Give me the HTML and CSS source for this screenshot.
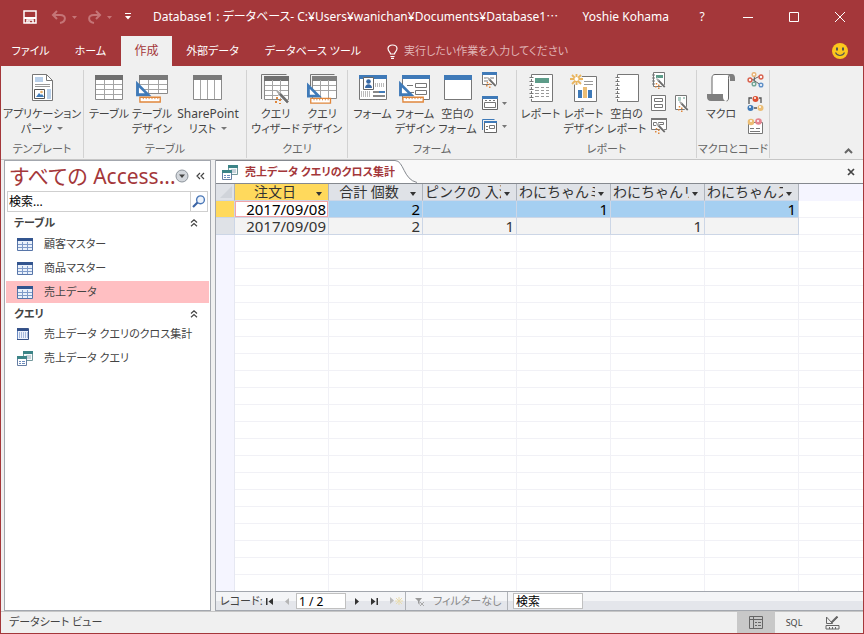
FILE: index.html
```html
<!DOCTYPE html>
<html lang="ja">
<head>
<meta charset="utf-8">
<title>Database1</title>
<link rel="stylesheet" href="styles.css">
</head>
<body>
<svg class="defs" width="0" height="0" aria-hidden="true">
  <symbol id="ruler" viewBox="0 0 33 30"><path d="M0 7v16h16z" fill="#3f7ab8"/><path d="M3 14v6h6z" fill="#fff"/><path d="M4 24h21v5H4z" fill="#fff" stroke="#e0873c" stroke-width="1.400"/><path d="M7.500 24v2M10.500 24v2M13.500 24v2M16.500 24v2M19.500 24v2M22.500 24v2" stroke="#e0873c"/></symbol>
  <symbol id="wand" viewBox="0 0 16 16"><path d="M2 2l11 12" stroke="#fff" stroke-width="4"/><path d="M4 4l9 9.500" stroke="#6e6e6e" stroke-width="2.600"/><path d="M2 2l3 3" stroke="#aaa" stroke-width="2"/><path d="M1 8h2v2H1zM4 10h2v2H4zM0 12h2v2H0zM4 14h2v2H4z" fill="#e0873c"/></symbol>
  <symbol id="sheet" viewBox="0 0 16 13"><path d="M.5.5h15v12H.5z" fill="#eaf1fb" stroke="#5775a8"/><path d="M0 0h16v3H0z" fill="#33558f"/><path d="M1 6.500h14M1 9.500h14M5.500 4v8M10.500 4v8" stroke="#7f9bc9"/></symbol>
  <symbol id="query" viewBox="0 0 16 15"><path d="M6.500.5h9v9h-9z" fill="#f5fafa" stroke="#74999c"/><path d="M6 0h10v3H6z" fill="#3c8487"/><path d="M9 5h5M9 7h5" stroke="#9ab"/><path d="M.5 5.500h9v9h-9z" fill="#fff" stroke="#667ea3"/><path d="M0 5h10v3H0z" fill="#3c8487"/><path d="M2 10h2v1H2zM5 10h3v1H5zM2 12h2v1H2zM5 12h3v1H5z" fill="#6d8dbd"/></symbol>
  <symbol id="crosstab" viewBox="0 0 14 12"><path d="M.5.5h13v11H.5z" fill="#edf2fb" stroke="#385388"/><path d="M1 1h12v2H1z" fill="#31508a"/><path d="M1 3h2v8H1z" fill="#6a8bc4"/><path d="M4 5h9M4 7h9M4 9h9" stroke="#5c7ebc" stroke-dasharray="1 1"/></symbol>
  <symbol id="chev" viewBox="0 0 8 8"><path d="M1 3.500L4 .8l3 2.700M1 7.300l3-2.700 3 2.700" fill="none" stroke="#444" stroke-width="1.200"/></symbol>
</svg>
<div class="window">
  <header class="titlebar">
    <div class="quick">
      <button class="q-save" aria-label="上書き保存"><svg width="14" height="14"><path d="M1 1h12v12H1z" fill="none" stroke="#fff" stroke-width="1.500"/><path d="M1 8h12" stroke="#fff" stroke-width="2"/><path d="M4 13v-3h6v3M6 11v2" fill="none" stroke="#fff" stroke-width="1.500"/></svg></button>
      <button class="q-undo" aria-label="元に戻す"><svg width="27" height="14" fill="none" stroke="#c57577"><path d="M6 1L2 5l4 4M2 5h7c7 0 6 7 0 8" stroke-width="2"/><path d="M21 6h5l-2.500 3z" fill="#c57577" stroke="none"/></svg></button>
      <button class="q-redo" aria-label="やり直し"><svg width="26" height="14" fill="none" stroke="#c57577"><path d="M9 1l4 4-4 4M13 5H7c-7 0-6 7 0 8" stroke-width="2"/><path d="M20 6h5l-2.500 3z" fill="#c57577" stroke="none"/></svg></button>
      <button class="q-more" aria-label="カスタマイズ"><svg width="6" height="7"><path d="M0 0h6v1H0zM0 3h6L3 6.500z" fill="#fff"/></svg></button>
    </div>
    <h1 class="doc-title">Database1 : データベース- C:¥Users¥wanichan¥Documents¥Database1<span class="cjk">…</span></h1>
    <span class="user">Yoshie Kohama</span>
    <button class="cap">?</button>
    <button class="cap" aria-label="最小化"><svg width="12" height="12"><path d="M1 6.500h10" stroke="#fff"/></svg></button>
    <button class="cap" aria-label="最大化"><svg width="12" height="12"><path d="M1.500 1.500h9v9h-9z" fill="none" stroke="#fff"/></svg></button>
    <button class="cap" aria-label="閉じる"><svg width="12" height="12"><path d="M1 1l10 10M11 1L1 11" stroke="#fff"/></svg></button>
  </header>
  <nav class="tabs">
    <button>ファイル</button><button>ホーム</button><button class="active">作成</button><button>外部データ</button><button>データベース ツール</button>
    <label class="tell"><svg width="11" height="15" fill="none" stroke="#fff" stroke-width="1.200"><path d="M3.500 10c0-2-2.500-2.500-2.500-5.500C1 2.500 3 1 5.500 1S10 2.500 10 4.500c0 3-2.500 3.500-2.500 5.500zM3.500 12.500h4M4 14.400h3"/></svg><input type="text" placeholder="実行したい作業を入力してください"></label>
    <button class="smile" aria-label="フィードバック"><svg width="16" height="16"><circle cx="8" cy="8" r="8" fill="#fcc71d"/><path d="M4 4.500h2v3H4zM10 4.500h2v3h-2z" fill="#555"/><path d="M3.500 9.500c2 4 7 4 9 0" fill="none" stroke="#555" stroke-width="1.200"/></svg></button>
  </nav>
  <div class="ribbon">
    <section class="group g-template">
      <div class="tools">
        <button class="big"><svg width="21" height="29"><path d="M.5.5h14l6 6v20H.5z" fill="#fff" stroke="#777"/><path d="M14.500.5v6h6" fill="none" stroke="#777"/><path d="M3 3h8v5H3zM15 15h4v10h-4z" fill="#b9d0ea"/><path d="M3 10.500h15M3 12.500h15" stroke="#999"/><path d="M2.500 15.500h10v9h-10z" fill="#fff" stroke="#555"/><path d="M4 23l3-4 2 2 1-1 2 3z" fill="#3f7ab8"/><circle cx="9.500" cy="18" r="1.300" fill="#e8b06a"/></svg><span>アプリケーション<br>パーツ<i class="caret"></i></span></button>
      </div>
      <h2>テンプレート</h2>
    </section>
    <section class="group g-table">
      <div class="tools">
        <button class="big"><svg width="28" height="29"><path d="M.5 2.500h27v23H.5z" fill="#fff" stroke="#8a8a8a"/><path d="M0 1h28v5H0z" fill="#6f6f6f"/><path d="M1 10.500h26M1 15.500h26M1 20.500h26M9.500 6v19M18.500 6v19" stroke="#a5a5a5"/></svg><span>テーブル</span></button>
        <button class="big"><svg width="32" height="29"><path d="M3.500 2.500h28v17h-28z" fill="#fff" stroke="#8a8a8a"/><path d="M3 1h29v5H3z" fill="#7a7a7a"/><path d="M4 10.500h27M4 15.500h27M12.500 6v13M22.500 6v13" stroke="#a5a5a5"/><use href="#ruler" width="32" height="29"/></svg><span>テーブル<br>デザイン</span></button>
        <button class="big"><svg width="30" height="29"><path d="M.5 2.500h28v23H.5z" fill="#fff" stroke="#8a8a8a"/><path d="M0 1h29v5H0z" fill="#7a7a7a"/><path d="M7.500 6v19M14.500 6v19M21.500 6v19" stroke="#a5a5a5"/></svg><span><span class="latin">SharePoint</span><br>リスト<i class="caret"></i></span></button>
      </div>
      <h2>テーブル</h2>
    </section>
    <section class="group g-query">
      <div class="tools">
        <button class="big"><svg width="30" height="31"><path d="M.5 25V.5h25" fill="none" stroke="#777"/><path d="M3.500 3.500h24v22h-24z" fill="#fff" stroke="#8a8a8a"/><path d="M3 2h25v5H3z" fill="#6f6f6f"/><path d="M4 11.500h23M4 16.500h23M4 21.500h23M11.500 6v19M19.500 6v19" stroke="#a5a5a5"/><use href="#wand" x="14" y="15" width="16" height="16"/></svg><span>クエリ<br>ウィザード</span></button>
        <button class="big"><svg width="31" height="31"><path d="M3.500 12V.5h24" fill="none" stroke="#777"/><path d="M5.500 3.500h24v21h-24z" fill="#fff" stroke="#8a8a8a"/><path d="M5 2h25v5H5z" fill="#7f7f7f"/><path d="M6 11.500h23M6 16.500h23M13.500 6v18M21.500 6v18" stroke="#a5a5a5"/><use href="#ruler" x="0" y="1" width="31" height="30"/></svg><span>クエリ<br>デザイン</span></button>
      </div>
      <h2>クエリ</h2>
    </section>
    <section class="group g-form">
      <div class="tools">
        <button class="big"><svg width="28" height="29"><path d="M.5 1.500h27v24H.5z" fill="#fff" stroke="#777"/><path d="M0 1h28v4H0z" fill="#3f7ab8"/><path d="M4.500 3.500h10v12h-10z" fill="#fff" stroke="#666"/><circle cx="9.500" cy="7.500" r="2.300" fill="#3768a5"/><path d="M6 14c0-5 7-5 7 0z" fill="#3768a5"/><path d="M16 10h10M16 12h10M2 18h10M2 20h10M2 22h10" stroke="#777" stroke-dasharray="1 1"/><path d="M14 18h6M14 22h12" stroke="#888" stroke-width="2"/><path d="M20 18h6" stroke="#3f7ab8" stroke-width="2"/></svg><span>フォーム</span></button>
        <button class="big"><svg width="32" height="29"><path d="M3.500 1.500h27v24h-27z" fill="#fff" stroke="#777"/><path d="M3 1h28v4H3z" fill="#3f7ab8"/><path d="M16.500 9.500h11v4h-11zM16.500 16.500h11v4h-11zM8 11.500h6M11 18.500h4" fill="none" stroke="#777"/><use href="#ruler" width="32" height="29"/></svg><span>フォーム<br>デザイン</span></button>
        <button class="big"><svg width="28" height="29"><path d="M.5 1.500h27v24H.5z" fill="#fff" stroke="#777"/><path d="M0 1h28v5H0z" fill="#3f7ab8"/></svg><span>空白の<br>フォーム</span></button>
        <div class="minis">
          <button aria-label="フォーム ウィザード"><svg width="16" height="16"><path d="M.5.5h14v12H.5z" fill="#fff" stroke="#777"/><path d="M0 0h15v3H0z" fill="#3f7ab8"/><path d="M2 6h4M2 9h4M8 6h4" stroke="#777"/><use href="#wand" x="4" y="4" width="12" height="12"/></svg></button>
          <button aria-label="ナビゲーション"><svg width="26" height="14"><path d="M.5.5h15v13H.5z" fill="#fff" stroke="#666"/><path d="M0 0h16v3H0z" fill="#3f7ab8"/><path d="M2.500 6.500h11v5h-11zM3 4.500h2M7 4.500h2M11 4.500h2" fill="none" stroke="#777"/><path d="M20 6h5l-2.500 3z" fill="#777"/></svg></button>
          <button aria-label="その他のフォーム"><svg width="26" height="14"><path d="M.5 11V.5h12" fill="none" stroke="#3f7ab8"/><path d="M2.500 2.500h12v11h-12z" fill="#fff" stroke="#666"/><path d="M2 2h13v2H2z" fill="#3f7ab8"/><path d="M7.500 6.500h5v3h-5zM4 7.500h2M4 10.500h2" fill="none" stroke="#777"/><path d="M20 6h5l-2.500 3z" fill="#777"/></svg></button>
        </div>
      </div>
      <h2>フォーム</h2>
    </section>
    <section class="group g-report">
      <div class="tools">
        <button class="big"><svg width="24" height="29"><path d="M2.500.5h21v27h-21z" fill="#fff" stroke="#777"/><path d="M6 4h14v5H6z" fill="#5d9c89"/><path d="M6 13.500h4M12 13.500h3M17 13.500h3M6 16.500h4M12 16.500h3M17 16.500h3M6 19.500h4M12 19.500h3M17 19.500h3M6 22.500h4M12 22.500h3M17 22.500h3" stroke="#999"/><path d="M2.500 3v24" stroke="#fff" stroke-width="3" stroke-dasharray="2 2"/><path d="M2.500 3v24" stroke="#777" stroke-width="4" stroke-dasharray="1 3"/></svg><span>レポート</span></button>
        <button class="big"><svg width="27" height="31"><path d="M4.500 2.500h22v25h-22z" fill="#fff" stroke="#777"/><path d="M14 7.500h9M14 10.500h9" stroke="#999"/><path d="M8 16h4v8H8zM18 16h4v8h-4z" fill="#3f7ab8"/><path d="M13 13h4v11h-4z" fill="#ecbe75"/><circle cx="6.500" cy="5" r="6" fill="#f0f0f0"/><path d="M6.500-1v12M0 5h13M2 1l9 9M11 1L2 10" stroke="#e9b55f" stroke-width="1.800"/><circle cx="6.500" cy="5" r="2" fill="#fff"/></svg><span>レポート<br>デザイン</span></button>
        <button class="big"><svg width="24" height="29"><path d="M2.500.5h21v27h-21z" fill="#fff" stroke="#777"/><path d="M2.500 3v24" stroke="#fff" stroke-width="3" stroke-dasharray="2 2"/><path d="M2.500 3v24" stroke="#777" stroke-width="4" stroke-dasharray="1 3"/></svg><span>空白の<br>レポート</span></button>
        <div class="minis">
          <button aria-label="レポート ウィザード"><svg width="16" height="17"><path d="M2.500.5h11v14h-11z" fill="#fff" stroke="#777"/><path d="M5 3h7v3H5z" fill="#5d9c89"/><path d="M1 3h3M1 6h3M1 9h3M1 12h3" stroke="#777"/><use href="#wand" x="4" y="5" width="12" height="12"/></svg></button>
          <button aria-label="伝票ウィザード"><svg width="15" height="16"><path d="M.5.5h14v15H.5zM3.500 3.500h8v3h-8zM3.500 9.500h8v3h-8z" fill="#fff" stroke="#777"/></svg></button>
          <button aria-label="はがきウィザード"><svg width="16" height="16"><path d="M.5.5h15v11H.5z" fill="#fff" stroke="#777"/><path d="M0 0h16v2H0z" fill="#777"/><path d="M2.500 4.500h3v3h-3zM7.500 4.500h5v2h-5z" fill="none" stroke="#777"/><use href="#wand" x="4" y="4" width="12" height="12"/></svg></button>
        </div>
        <div class="minis single"><button aria-label="宛名ラベル"><svg width="15" height="17"><path d="M.5.5h11v14H.5z" fill="#fff" stroke="#777"/><path d="M3 3h3M3 5h3M8 3h2" stroke="#5d9c89"/><use href="#wand" x="3" y="5" width="12" height="12"/></svg></button></div>
      </div>
      <h2>レポート</h2>
    </section>
    <section class="group g-macro">
      <div class="tools">
        <button class="big"><svg width="28" height="28"><path d="M5 21V4c0-2 1-3.500 3-3.500h16c-2 0-2.500 2-2.500 4V24c0 2-1 3-2 3" fill="#fff" stroke="#666"/><path d="M8 0h17c2 0 3 2 3 4v3h-5V4c0-2-1-3-3-3z" fill="#7f7f7f"/><path d="M0 20h16v3c0 2 1 4 3 4H4c-3 0-4-2-4-4z" fill="#7f7f7f"/></svg><span>マクロ</span></button>
        <div class="minis">
          <button aria-label="モジュール"><svg width="17" height="16" fill="#fff" stroke-width="1.500"><path d="M3 6l11 7M3 9l10-5M7 3l1 8" stroke="#666" stroke-width="1"/><circle cx="7" cy="2.500" r="1.800" stroke="#e9b57a"/><circle cx="14" cy="5" r="1.900" stroke="#d9634f"/><circle cx="3" cy="8" r="1.900" stroke="#d9634f"/><circle cx="7" cy="12" r="1.800" stroke="#75a797"/><circle cx="14" cy="13" r="1.800" stroke="#6090c8"/></svg></button>
          <button aria-label="クラス モジュール"><svg width="17" height="17"><path d="M2 9V3h3M12 3h2v5M7 13h3" fill="none" stroke="#555" stroke-width="1.300"/><circle cx="8.500" cy="4" r="3" fill="#dc5032"/><circle cx="3.500" cy="13" r="3" fill="#3f7ab8"/><circle cx="13.500" cy="13" r="3" fill="#ecbe75"/><circle cx="8" cy="3" r="1" fill="#fff"/><circle cx="3" cy="12" r="1" fill="#fff"/><circle cx="13" cy="12" r="1" fill="#fff"/></svg></button>
          <button aria-label="Visual Basic"><svg width="17" height="16"><path d="M1.500 4.500h14v11h-14z" fill="#fff" stroke="#777"/><path d="M3 10.500h4M9 10.500h4M3 13.500h10" stroke="#777"/><circle cx="4" cy="4" r="3.300" fill="#ecbe75"/><circle cx="11.500" cy="3.500" r="3.300" fill="#e48490"/><circle cx="4" cy="3" r="1" fill="#fff"/><circle cx="11" cy="3" r="1" fill="#fff"/></svg></button>
        </div>
      </div>
      <h2>マクロとコード</h2>
    </section>
    <button class="collapse" aria-label="リボンを折りたたむ"><svg width="9" height="6"><path d="M1 5l3.500-3.500L8 5" fill="none" stroke="#666" stroke-width="2"/></svg></button>
  </div>
  <main class="work">
    <aside class="nav-pane">
      <div class="nav-head"><h2>すべての Access...</h2><button aria-label="メニュー"><svg width="14" height="14"><circle cx="7" cy="7" r="6" fill="#d3d7dc" stroke="#8d949c"/><path d="M4 5.500h6L7 9z" fill="#444"/></svg></button><button aria-label="閉じる"><svg width="9" height="8"><path d="M4 1L1 4l3 3M8 1L5 4l3 3" fill="none" stroke="#444" stroke-width="1.200"/></svg></button></div>
      <div class="nav-search"><input type="text" value="検索..." aria-label="検索"><button aria-label="検索実行"><svg width="14" height="13"><circle cx="8.500" cy="4.800" r="3.900" fill="#eef4fc" stroke="#4b78b8" stroke-width="1.400"/><path d="M5.500 7.500L1 12" stroke="#3b64a4" stroke-width="2.200"/></svg></button></div>
      <h3>テーブル<svg width="8" height="8"><use href="#chev" width="8" height="8"/></svg></h3>
      <ul>
        <li><a href="#"><svg width="16" height="13"><use href="#sheet"/></svg>顧客マスター</a></li>
        <li><a href="#"><svg width="16" height="13"><use href="#sheet"/></svg>商品マスター</a></li>
        <li><a href="#" class="sel"><svg width="16" height="13"><use href="#sheet"/></svg>売上データ</a></li>
      </ul>
      <h3>クエリ<svg width="8" height="8"><use href="#chev" width="8" height="8"/></svg></h3>
      <ul>
        <li><a href="#"><svg width="16" height="12" viewBox="2 0 16 12"><use href="#crosstab" width="14" height="12"/></svg>売上データ クエリのクロス集計</a></li>
        <li><a href="#"><svg width="16" height="15"><use href="#query"/></svg>売上データ クエリ</a></li>
      </ul>
    </aside>
    <section class="doc">
      <div class="doc-tabs"><div class="doc-tab"><svg width="16" height="15"><use href="#query"/></svg>売上データ クエリのクロス集計</div><svg class="slope" width="22" height="23" viewBox="0 0 22 23"><path d="M0 0c9 0 8 20 22 23H0z" fill="#fff"/><path d="M0 .5c9 0 8 19 22 22" fill="none" stroke="#85898f"/></svg><button aria-label="閉じる"><svg width="8" height="8"><path d="M1 1l6 6M7 1L1 7" stroke="#444" stroke-width="1.700"/></svg></button></div>
      <div class="sheet">
        <table>
          <thead><tr><th class="corner"><svg width="12" height="12"><path d="M12 0v12H0z" fill="#d0d4da"/></svg></th><th class="cur"><div><span>注文日</span><i></i></div></th><th><div><span>合計 個数</span><i></i></div></th><th class="left"><div><span>ピンクの 入浴</span><i></i></div></th><th class="left"><div><span>わにちゃんミ</span><i></i></div></th><th class="left"><div><span>わにちゃんリ</span><i></i></div></th><th class="left"><div><span>わにちゃんス</span><i></i></div></th></tr></thead>
          <tbody>
            <tr class="on"><th></th><td class="focus">2017/09/08</td><td>2</td><td></td><td>1</td><td></td><td>1</td></tr>
            <tr><th></th><td>2017/09/09</td><td>2</td><td>1</td><td></td><td>1</td><td></td></tr>
          </tbody>
        </table>
      </div>
      <div class="record">
        <label for="rec">レコード:</label>
        <button aria-label="先頭"><svg width="8" height="7"><path d="M0 0h1.500v7H0zM7 0v7L2.500 3.500z" fill="#333"/></svg></button>
        <button aria-label="前"><svg width="5" height="7"><path d="M4 0v7L0 3.500z" fill="#b5b5b5"/></svg></button>
        <input id="rec" class="rec-no" type="text" value="1 / 2">
        <button aria-label="次"><svg width="5" height="7"><path d="M0 0v7l4-3.500z" fill="#333"/></svg></button>
        <button aria-label="最後"><svg width="8" height="7"><path d="M5.500 0H7v7H5.500zM0 0v7l4.500-3.500z" fill="#333"/></svg></button>
        <button aria-label="新規"><svg width="13" height="8"><path d="M0 0v7l4-3.500z" fill="#bbb"/><path d="M9 0v8M5 4h8M6 1l6 6M12 1L6 7" stroke="#e9dcae"/></svg></button>
        <button class="filter"><svg width="9" height="9"><path d="M0 1h7L4.500 4v4L3 6V4z" fill="#999"/><path d="M5 5l4 4M9 5L5 9" stroke="#aaa"/></svg>フィルターなし</button>
        <input class="find" type="text" value="検索" aria-label="検索">
      </div>
    </section>
  </main>
  <footer class="status"><span>データシート ビュー</span>
    <button class="view on" aria-label="データシート ビュー"><svg width="14" height="14" fill="none" stroke="#666"><path d="M.5.5h13v12H.5zM.5 3.500h13M4.500.5v12"/><path d="M6 6.500h2M9 6.500h3M6 9.500h2M9 9.500h3" stroke-width="1"/></svg></button>
    <button class="view">SQL</button>
    <button class="view" aria-label="デザイン ビュー"><svg width="15" height="14" fill="none" stroke="#666"><path d="M1.500 1v6.500h6zM6 7l7-6M1 9.500h13v3.500H1z"/><path d="M12.500.5l-6 6" stroke-width="2"/><path d="M4.500 11v2M7.500 11v2M10.500 11v2"/></svg></button>
  </footer>
</div>
</body>
</html>
```
FILE: styles.css
```css
* { box-sizing: border-box; }
body {
  margin: 0;
  font: 12px/14px "Noto Sans", "Noto Sans CJK JP", sans-serif;
  font-feature-settings: "palt";
  color: #444;
}
button, input { font: inherit; font-feature-settings: inherit; color: inherit; border: 0; padding: 0; margin: 0; background: none; border-radius: 0; }
h1, h2, h3, ul { margin: 0; padding: 0; font-size: inherit; font-weight: normal; list-style: none; }
svg { display: block; flex: none; }
.defs { position: absolute; }
.window { min-height: 100vh; display: flex; flex-direction: column; border: 1px solid #a4373a; border-top: 0; background: #f0f0f0; }

.titlebar { display: flex; height: 33px; align-items: center; background: #a4373a; color: #fff; }
.quick { display: flex; align-items: center; width: 152px; padding-left: 22px; }
.q-undo { margin-left: 14px; }
.q-redo { margin-left: 9px; }
.q-more { margin-left: 12px; }
.doc-title { flex: 1; min-width: 0; line-height: 18px; white-space: nowrap; }
.cjk { font-family: "Noto Sans CJK JP", sans-serif; font-feature-settings: normal; }
.user { padding: 0 10px; white-space: nowrap; }
.cap { width: 46px; height: 33px; display: flex; align-items: center; justify-content: center; }

.tabs { display: grid; grid-template-columns: 59px 61px 51px 81px 120px 1fr 47px; height: 33px; padding-top: 3px; background: #a4373a; color: #fff; font-size: 11px; white-space: nowrap; }
.tabs .active { background: #f0f0f0; color: #a4373a; font-size: 12px; }
.tell { display: flex; align-items: center; gap: 6px; padding-left: 14px; }
.tell input { flex: 1; min-width: 0; }
.tell input::placeholder { color: #e0b5b6; opacity: 1; }
.smile { display: flex; align-items: center; justify-content: center; }

.ribbon { display: flex; height: 94px; padding: 4px 0 1px; border-bottom: 1px solid #c6c6c6; }
.group { display: flex; flex-direction: column; justify-content: space-between; border-right: 1px solid #d2d2d2; }
.group h2 { padding-bottom: 2px; text-align: center; color: #666; white-space: nowrap; font-size: 11px; line-height: 14px; }
.tools { display: grid; justify-content: center; height: 72px; padding-top: 2px; }
.g-template { width: 83px; }
.g-table { width: 163px; }
.g-query { width: 101px; }
.g-form { width: 169px; }
.g-report { width: 180px; }
.g-macro { width: 73px; }
.g-template .tools { grid-template-columns: 80px; }
.g-table .tools { grid-template-columns: 43px 43px 69px; }
.g-query .tools { grid-template-columns: 50px 43px; }
.g-form .tools { grid-template-columns: 43px 42px 43px 34px; }
.g-report .tools { grid-template-columns: 43px 43px 43px 24px 22px; }
.g-macro .tools { grid-template-columns: 46px 24px; }
.big { display: flex; flex-direction: column; align-items: center; justify-content: flex-start; white-space: nowrap; font-size: 11px; line-height: 15px; }
.big svg { margin: 0 0 2px; height: 32px; padding-top: 2px; }
.latin { font-size: 12px; }
.caret { display: inline-block; margin: 0 0 3px 5px; border: 3px solid transparent; border-top-color: #777; border-bottom: 0; }
.minis { display: flex; flex-direction: column; gap: 7px; padding-left: 3px; }
.minis button { height: 16px; text-align: left; }
.minis.single { padding-top: 23px; }
.collapse { margin: auto 10px 4px auto; }

.work { flex: 1; display: flex; padding-left: 3px; min-height: 0; }
.nav-pane { width: 207px; padding: 0 1px; background: #fff; border: 1px solid #a3a7ae; }
.nav-head { display: flex; align-items: center; height: 30px; gap: 7px; padding: 0 4px; }
.nav-head h2 { flex: 1; min-width: 0; color: #a4373a; font-size: 21px; line-height: 28px; white-space: nowrap; }
.nav-search { display: flex; height: 21px; margin: 0 1px; border: 1px solid #cfcfcf; }
.nav-search input { flex: 1; min-width: 0; padding: 0 1px; color: #000; }
.nav-search button { width: 17px; border-left: 1px solid #cfcfcf; display: flex; align-items: center; justify-content: center; }
.nav-pane h3 { display: flex; align-items: center; justify-content: space-between; height: 20px; padding: 2px 11px 0 8px; font-size: 11px; font-weight: bold; }
.nav-pane li { height: 24px; padding: 1px 0; }
.nav-pane ul + h3 { height: 18px; }
.nav-pane a { display: flex; align-items: center; gap: 11px; height: 22px; padding-left: 11px; font-size: 11px; color: #444; text-decoration: none; white-space: nowrap; }
.nav-pane .sel { background: #ffbfc2; }

.doc { flex: 1; min-width: 0; display: flex; flex-direction: column; margin-left: 4px; border: 1px solid #a3a7ae; border-top: 0; border-right: 0; }
.doc-tabs { display: flex; height: 24px; background: #f8f8f8; border-bottom: 1px solid #85898f; }
.doc-tab { display: flex; align-items: center; gap: 7px; padding-left: 6px; background: #fff; border-top: 1px solid #85898f; color: #a4373a; font-size: 11px; font-weight: bold; white-space: nowrap; }
.doc-tabs button { margin-left: auto; padding-right: 8px; }
.sheet {
  flex: 1;
  background:
    linear-gradient(90deg, #f5f5ff 18px, #e6e8f2 18px, #e6e8f2 19px, transparent 19px),
    linear-gradient(#f5f5ff 17px, transparent 17px),
    repeating-linear-gradient(transparent 0, transparent 16px, #f1f1f6 16px, #f1f1f6 17px),
    repeating-linear-gradient(90deg, transparent 0, transparent 93px, #f1f1f6 93px, #f1f1f6 94px) 19px 0 / 564px 100% no-repeat,
    #fff;
}
table { table-layout: fixed; width: 583px; border-collapse: separate; border-spacing: 0; font-size: 15px; line-height: 16px; font-feature-settings: normal; color: #333; }
th, td { width: 94px; height: 17px; padding: 0 2px; border: 0 solid #ccd6e6; border-width: 0 1px 1px 0; font-weight: normal; }
td { text-align: right; background: #f3f3f3; }
th { background: #dfe2e7; font-size: 14px; }
thead th { border-right-color: #aeb3bb; }
th:first-child { width: 19px; }
.corner svg { margin-left: 2px; }
th div { display: flex; height: 16px; overflow: hidden; }
th div span { flex: 1; min-width: 0; overflow: hidden; white-space: nowrap; }
th.left span { text-align: left; }
th i { align-self: center; margin: 4px 4px 0 3px; border: 3px solid transparent; border-top: 4px solid #333; border-bottom: 0; }
thead .cur, .on th { background: #ffd95c; }
.on td { background: #a5cff1; color: #000; }
.on td.focus { background: #fff; box-shadow: inset 0 0 0 1px #f3a4a8; }

.record { display: flex; align-items: center; height: 19px; padding-left: 4px; border-top: 1px solid #a3a7ae; background: linear-gradient(#f4f5f7 50%, #e4e6eb 50%); white-space: nowrap; }
.record label { width: 46px; font-size: 11px; }
.record button { margin-right: 11px; }
.record .rec-no { width: 50px; margin: 0 9px 0 -5px; }
.record input { height: 16px; background: #fff; border: 1px solid #c0c0c0; padding: 0 2px; color: #000; }
.record .filter { display: flex; align-items: center; gap: 9px; height: 18px; width: 103px; margin: 0 5px 0 -9px; padding-left: 9px; border: 1px solid #b0b3b8; border-width: 0 1px; color: #888; font-size: 11px; }
.find { width: 70px; }

.status { display: flex; height: 22px; padding-right: 12px; border-top: 1px solid #c6c6c6; }
.status span { flex: 1; padding: 3px 8px; font-size: 11px; }
.view { width: 38px; display: flex; align-items: center; justify-content: center; font-size: 9px; }
.view.on { background: #c8c8c8; }
```
